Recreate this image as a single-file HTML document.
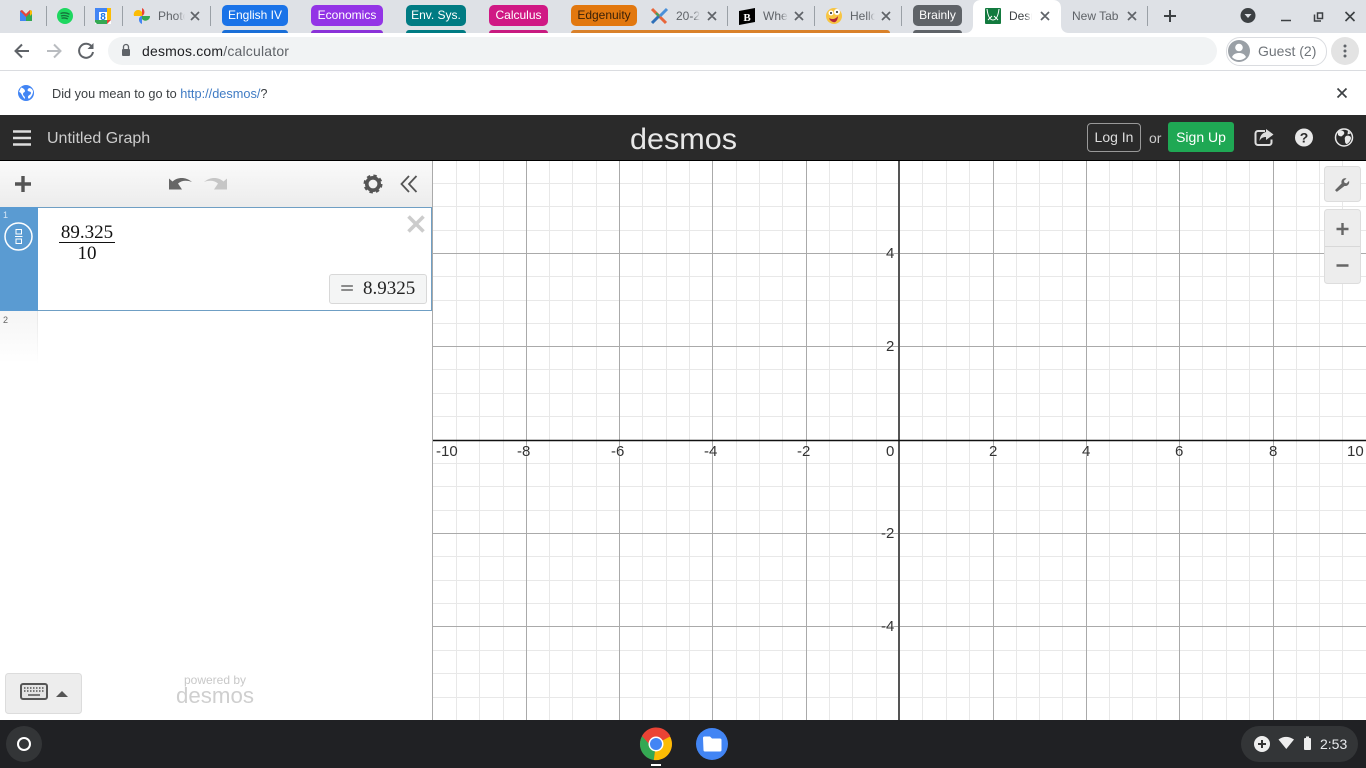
<!DOCTYPE html>
<html><head><meta charset="utf-8"><title>Desmos</title>
<style>
html,body{margin:0;padding:0;width:1366px;height:768px;overflow:hidden;background:#fff;font-family:"Liberation Sans",sans-serif}
.a{position:absolute;white-space:nowrap}
.chip{position:absolute;top:5px;height:21px;line-height:21px;border-radius:5px;color:#fff;font-size:12px;text-align:center}
.ul{position:absolute;top:30px;height:3px;border-radius:4px 4px 0 0}
.tt{position:absolute;top:9px;font-size:12px;line-height:14px;color:#5f6368;overflow:hidden;white-space:nowrap;-webkit-mask-image:linear-gradient(90deg,#000 70%,transparent);mask-image:linear-gradient(90deg,#000 70%,transparent)}
.sep{position:absolute;top:6px;width:1px;height:20px;background:#9aa0a6}
.lb{position:absolute;font-size:15px;line-height:16px;color:#333;text-shadow:0 0 2px #fff;white-space:nowrap}
svg{position:absolute;overflow:visible}
</style></head><body>
<div class="a" style="left:0;top:0;width:1366px;height:33px;background:#dee1e6"></div>
<div class="a" style="left:0;top:33px;width:1366px;height:37px;background:#fff"></div>
<div class="a" style="left:0;top:70px;width:1366px;height:1px;background:#dadce0"></div>

<!-- active tab -->
<svg style="left:0;top:0" width="1366" height="33"><path d="M965 33c5 0 8-3 8-8V8c0-5 3-8 8-8h72c5 0 8 3 8 8v17c0 5 3 8 8 8z" fill="#fff"/>
<g stroke="#5f6368" stroke-width="1.7" fill="none">
<path d="M191 12l8 8M199 12l-8 8M708 12l8 8M716 12l-8 8M795 12l8 8M803 12l-8 8M882 12l8 8M890 12l-8 8M1041 12l8 8M1049 12l-8 8M1128 12l8 8M1136 12l-8 8"/></g>
<path d="M1164 16h12M1170 10v12" stroke="#3c4043" stroke-width="2" fill="none"/>
<!-- gmail -->
<path d="M20 21V11l2-1 4 4v7z" fill="#4285f4"/><path d="M32 21V11l-2-1-4 4v7z" fill="#34a853"/><path d="M20 11l2-1 4 4 4-4 2 1-6 6z" fill="#ea4335"/><path d="M30 10l2 1v3l-2 2z" fill="#fbbc04"/>
<!-- spotify -->
<circle cx="65" cy="16" r="8" fill="#1ed760"/><path d="M60.500 13.500c3-1 6.500-.7 9 .8M61 16c2.600-.8 5.400-.5 7.700.7M61.500 18.300c2.200-.6 4.400-.4 6.300.6" stroke="#14713a" stroke-width="1.300" fill="none"/>
<!-- calendar -->
<rect x="95" y="8" width="16" height="16" fill="#fff"/><path d="M95 8h12v4H99v8h-4z" fill="#4285f4"/><path d="M95 20h12v4H97l-2-2z" fill="#34a853"/><path d="M107 8h4v12h-4z" fill="#fbbc04"/><path d="M107 20h4l-4 4z" fill="#ea4335"/>
<text x="103" y="20" font-size="10" font-weight="bold" text-anchor="middle" fill="#1a73e8" font-family="Liberation Sans">8</text>
<!-- photos -->
<path d="M142 16v-8a4.500 4.500 0 0 1 0 8z" fill="#ea4335"/><path d="M142 16h-8a4.500 4.500 0 0 1 8-4z" fill="#fbbc04"/><path d="M142 16v8a4.500 4.500 0 0 1-1-8z" fill="#4285f4"/><path d="M142 16h8a4.500 4.500 0 0 1-8 3z" fill="#34a853"/>
<!-- X favicon -->
<path d="M652 9l14 14" stroke="#e8663a" stroke-width="3"/><path d="M667 9l-7 7" stroke="#4a90d9" stroke-width="3"/><path d="M652 23l7-7" stroke="#2d6fb8" stroke-width="3"/><path d="M659 16l-3-3" stroke="#3fa35b" stroke-width="2"/>
<!-- B -->
<path d="M739 11l16-3v14l-16 3z" fill="#000"/><text x="747" y="21" font-size="11" font-weight="bold" text-anchor="middle" fill="#fff" font-family="Liberation Serif">B</text>
<!-- emoji -->
<circle cx="834" cy="16" r="8" fill="#f7c543"/><circle cx="831" cy="13" r="2.500" fill="#fff"/><circle cx="837" cy="12" r="3" fill="#fff"/><circle cx="831" cy="13" r="1" fill="#222"/><circle cx="837" cy="12" r="1" fill="#222"/><path d="M829 18c3 2 7 1 9-2-.3 4-2 7-5 6-2-.6-3.500-2-4-4z" fill="#b3263a"/>
<!-- desmos favicon -->
<rect x="985" y="8" width="16" height="16" rx="1" fill="#127a3e"/><path d="M987 9c1 8 3 11 6 11s5-3 6-11M988 20l4-4M998 20l-4-4" stroke="#fff" stroke-width="1" fill="none"/>
<!-- window controls -->
<circle cx="1248" cy="15.500" r="7.500" fill="#3c4043"/><path d="M1244.500 14h7l-3.500 4z" fill="#dee1e6"/>
<path d="M1281 20.500h10" stroke="#3c4043" stroke-width="1.500"/>
<path d="M1314.500 14.500v6.500h6.500M1317.500 13h5v5.500h-5z" stroke="#3c4043" stroke-width="1.500" fill="none"/>
<path d="M1345.500 12l9 9M1354.500 12l-9 9" stroke="#3c4043" stroke-width="1.600"/>
</svg>

<div class="sep" style="left:46px"></div><div class="sep" style="left:84px"></div><div class="sep" style="left:122px"></div><div class="sep" style="left:210px"></div>
<div class="sep" style="left:727px"></div><div class="sep" style="left:814px"></div><div class="sep" style="left:901px"></div><div class="sep" style="left:1147px"></div>

<div class="tt" style="left:158px;width:27px">Photos</div>
<div class="chip" style="left:222px;width:66px;background:#1a73e8">English IV</div><div class="ul" style="left:222px;width:66px;background:#1a6fd8"></div>
<div class="chip" style="left:311px;width:72px;background:#9334e6">Economics</div><div class="ul" style="left:311px;width:72px;background:#8a32d8"></div>
<div class="chip" style="left:406px;width:60px;background:#007b83">Env. Sys.</div><div class="ul" style="left:406px;width:60px;background:#007b83"></div>
<div class="chip" style="left:489px;width:59px;background:#d01884">Calculus</div><div class="ul" style="left:489px;width:59px;background:#c81a80"></div>
<div class="chip" style="left:571px;width:66px;background:#e2780f;color:#3b2108">Edgenuity</div><div class="ul" style="left:571px;width:319px;background:#d9812a"></div>
<div class="chip" style="left:913px;width:49px;background:#5f6368">Brainly</div><div class="ul" style="left:913px;width:49px;background:#5f6368"></div>
<div class="tt" style="left:676px;width:24px">20-21</div>
<div class="tt" style="left:763px;width:25px">Where</div>
<div class="tt" style="left:850px;width:25px">Hello</div>
<div class="tt" style="left:1009px;width:23px;color:#3c4043">Desmos</div>
<div class="a" style="left:1072px;top:9px;font-size:12px;line-height:14px;color:#5f6368">New Tab</div>

<!-- toolbar -->
<div class="a" style="left:108px;top:37px;width:1109px;height:28px;border-radius:14px;background:#f1f3f4"></div>
<div class="a" style="left:142px;top:43px;font-size:14px;letter-spacing:.19px;line-height:16px;color:#202124">desmos.com<span style="color:#5f6368">/calculator</span></div>
<div class="a" style="left:1226px;top:37px;width:99px;height:27px;border:1px solid #dadce0;border-radius:14px"></div>
<div class="a" style="left:1258px;top:43px;font-size:14px;line-height:16px;color:#70757a">Guest (2)</div>
<div class="a" style="left:1331px;top:37px;width:28px;height:28px;border-radius:14px;background:#e3e3e3"></div>
<svg style="left:0;top:0" width="1366" height="115">
<path d="M29 51H16M22 44.500L15.500 51l6.500 6.500" stroke="#5f6368" stroke-width="2" fill="none"/>
<path d="M47 51h13M54 44.500l6.500 6.500-6.500 6.500" stroke="#b9bcc0" stroke-width="2" fill="none"/>
<path d="M92 47a7 7 0 1 0 1 5" stroke="#5f6368" stroke-width="2" fill="none"/><path d="M93.500 43v6h-6z" fill="#5f6368"/>
<rect x="122" y="49" width="8" height="7" rx="1" fill="#5f6368"/><path d="M123.500 49v-2a2.500 2.500 0 0 1 5 0v2" stroke="#5f6368" stroke-width="1.300" fill="none"/>
<circle cx="1239" cy="51" r="11" fill="#9aa0a6"/><circle cx="1239" cy="47.500" r="3.800" fill="#fff"/><path d="M1232 57c1.500-3 4-4 7-4s5.500 1 7 4c-2 2-4 3-7 3s-5-1-7-3z" fill="#fff"/>
<g fill="#5f6368"><circle cx="1345" cy="46" r="1.500"/><circle cx="1345" cy="51" r="1.500"/><circle cx="1345" cy="56" r="1.500"/></g>
<circle cx="26" cy="93" r="8" fill="#4285f4"/><path d="M21 87.500c2 .5 4 2 4 3.500s-2 1-2 3 2 2 2 4-2-1-3-3-2-3-3-3zM30 88c-2 0-3 2-2 3s3 0 3 2-3 2-3 4 1 2 2 1 3-4 3-6-1-3-3-4z" fill="#fff"/>
<path d="M1337.500 88.500l9 9M1346.500 88.500l-9 9" stroke="#3c4043" stroke-width="1.700"/>
</svg>
<div class="a" style="left:52px;top:86px;font-size:12.750px;line-height:16px;color:#3c4043">Did you mean to go to <span style="color:#3f7bc4">http://desmos/</span>?</div>

<!-- desmos header -->
<div class="a" style="left:0;top:115px;width:1366px;height:45px;background:#2a2a2a"></div>
<div class="a" style="left:0;top:160px;width:1366px;height:1px;background:#000"></div>
<div class="a" style="left:47px;top:130px;font-size:16px;line-height:18px;color:#ccc">Untitled Graph</div>
<div class="a" style="left:1087px;top:123px;width:52px;height:27px;border:1px solid #999;border-radius:4px;color:#ddd;font-size:14px;line-height:27px;text-align:center">Log In</div>
<div class="a" style="left:1149px;top:130px;font-size:14px;line-height:16px;color:#ccc">or</div>
<div class="a" style="left:1168px;top:122px;width:66px;height:30px;background:#1fa854;border-radius:3px;color:#fff;font-size:14px;line-height:30px;text-align:center">Sign Up</div>

<!-- graph -->
<svg style="left:433px;top:161px" width="933" height="559" viewBox="433 161 933 559">
<path stroke="#e8e8e8" fill="none" d="M456.500 161v559M479.500 161v559M503.500 161v559M549.500 161v559M572.500 161v559M596.500 161v559M642.500 161v559M666.500 161v559M689.500 161v559M736.500 161v559M759.500 161v559M782.500 161v559M829.500 161v559M852.500 161v559M876.500 161v559M922.500 161v559M946.500 161v559M969.500 161v559M1016.500 161v559M1039.500 161v559M1062.500 161v559M1109.500 161v559M1132.500 161v559M1156.500 161v559M1202.500 161v559M1226.500 161v559M1249.500 161v559M1296.500 161v559M1319.500 161v559M1342.500 161v559
M433 183.500h933M433 206.500h933M433 230.500h933M433 276.500h933M433 300.500h933M433 323.500h933M433 369.500h933M433 393.500h933M433 416.500h933M433 463.500h933M433 486.500h933M433 510.500h933M433 556.500h933M433 580.500h933M433 603.500h933M433 650.500h933M433 673.500h933M433 697.500h933"/>
<path stroke="#aaa" fill="none" d="M526.500 161v559M619.500 161v559M712.500 161v559M806.500 161v559M993.500 161v559M1086.500 161v559M1179.500 161v559M1273.500 161v559M433 253.500h933M433 346.500h933M433 533.500h933M433 626.500h933"/>
<path d="M899 161v559" stroke="#555" stroke-width="2"/>
<path d="M433 440.500h933" stroke="#111" stroke-width="1.600"/>
</svg>
<div class="lb" style="left:436px;top:444px">-10</div><div class="lb" style="left:517px;top:444px">-8</div><div class="lb" style="left:611px;top:444px">-6</div><div class="lb" style="left:704px;top:444px">-4</div><div class="lb" style="left:797px;top:444px">-2</div><div class="lb" style="left:886px;top:444px">0</div><div class="lb" style="left:989px;top:444px">2</div><div class="lb" style="left:1082px;top:444px">4</div><div class="lb" style="left:1175px;top:444px">6</div><div class="lb" style="left:1269px;top:444px">8</div><div class="lb" style="left:1347px;top:444px">10</div>
<div class="lb" style="left:886px;top:246px">4</div><div class="lb" style="left:886px;top:339px">2</div><div class="lb" style="left:881px;top:526px">-2</div><div class="lb" style="left:881px;top:619px">-4</div>

<!-- left panel -->
<div class="a" style="left:0;top:161px;width:432px;height:559px;background:#fff;border-right:1px solid #aaa"></div>
<div class="a" style="left:0;top:161px;width:432px;height:46px;background:linear-gradient(#fafafa,#ececec)"></div>
<div class="a" style="left:0;top:207px;width:430px;height:102px;border:1px solid #6f9fc4;background:#fff"></div>
<div class="a" style="left:0;top:207px;width:38px;height:104px;background:#5a9bd2"></div>
<div class="a" style="left:0;top:311px;width:37px;height:52px;background:linear-gradient(#f5f5f5,#fff);border-right:1px solid #f0f0f0;border-image:linear-gradient(#e6e6e6,#fff) 1"></div>
<div class="a" style="left:3px;top:210px;font-size:9px;line-height:11px;color:#d5e6f5">1</div>
<div class="a" style="left:3px;top:315px;font-size:9px;line-height:11px;color:#666">2</div>
<div class="a" style="left:59px;top:222px;width:56px;height:20px;border-bottom:1px solid #111"></div>
<div class="a" style="left:59px;top:223px;width:56px;text-align:center;font-family:'Liberation Serif',serif;font-size:19px;line-height:20px;color:#111">89.325</div>
<div class="a" style="left:59px;top:244px;width:56px;text-align:center;font-family:'Liberation Serif',serif;font-size:19px;line-height:20px;color:#111">10</div>
<div class="a" style="left:329px;top:274px;width:96px;height:28px;background:#f4f5f5;border:1px solid #d8d8d8;border-radius:3px"></div>
<div class="a" style="left:340px;top:279px;font-family:'Liberation Serif',serif;font-size:20px;line-height:20px;color:#222;transform:scaleX(1.25);transform-origin:0 50%">=</div>
<div class="a" style="left:363px;top:279px;font-family:'Liberation Serif',serif;font-size:19px;line-height:20px;color:#222">8.9325</div>

<svg style="left:0;top:0" width="1366" height="768">
<!-- hamburger -->
<path d="M13 131.500h18M13 138h18M13 144.500h18" stroke="#ddd" stroke-width="2.600"/>
<!-- header icons -->
<path d="M1265 131h-7a2.500 2.500 0 0 0-2.500 2.500v9a2.500 2.500 0 0 0 2.500 2.500h11a2.500 2.500 0 0 0 2.500-2.500v-3" stroke="#ddd" stroke-width="2" fill="none"/><path d="M1266 129l7.500 5.500-7.500 5.500v-3c-3 0-5 1-6.500 4 .3-5 2.500-8 6.500-9z" fill="#ddd"/>
<circle cx="1304" cy="137.500" r="9" fill="#e8e8e8"/><text x="1304" y="142.500" font-size="14" font-weight="bold" text-anchor="middle" fill="#2a2a2a" font-family="Liberation Sans">?</text>
<circle cx="1344" cy="137.500" r="8.500" fill="#2a2a2a" stroke="#e8e8e8" stroke-width="1.500"/><path d="M1338 132c2-2 5-2 6 0s-1 3-2 4-3 0-4-1zM1346 136c2-1 5 0 5 2s-2 5-4 6c-1 0-2-1-2-3s-1-3 1-5zM1348 130.500l2.500 3-3 1z" fill="#e8e8e8"/>
<!-- expression toolbar -->
<path d="M15 184h16M23 176v16" stroke="#555" stroke-width="3.400"/>
<path d="M169 189.500V178.500l3.500 3c5-4.500 13-5 19.500.5c-6-2-10-1.500-14 1.500l4 6z" fill="#666"/>
<path d="M169 189.500V178.500l3.500 3c5-4.500 13-5 19.500.5c-6-2-10-1.500-14 1.500l4 6z" fill="#c6c6c6" transform="translate(396 0) scale(-1 1)"/>
<circle cx="373" cy="184" r="6.200" fill="none" stroke="#555" stroke-width="3.600"/>
<circle cx="373" cy="184" r="8" fill="none" stroke="#555" stroke-width="3" stroke-dasharray="3.300 3"/>
<path d="M409 176l-7.500 8 7.500 8M416.500 176l-7.500 8 7.500 8" stroke="#555" stroke-width="1.800" fill="none"/>
<!-- expression icon -->
<circle cx="18.500" cy="236.500" r="13.500" fill="none" stroke="#fff" stroke-width="1.500"/>
<rect x="16" y="229.500" width="5.500" height="4.500" fill="none" stroke="#fff"/><path d="M15 236.500h7.500" stroke="#fff"/><rect x="16" y="239" width="5.500" height="4.500" fill="none" stroke="#fff"/>
<path d="M408.500 216.500l15 15M423.500 216.500l-15 15" stroke="#ccc" stroke-width="3.600"/>
<!-- right controls -->
<rect x="1324.500" y="166.500" width="36" height="35" rx="3" fill="#ededed" stroke="#ddd"/>
<path transform="translate(1335 177.500) scale(.74) translate(-1334.500 -177.500)" d="M1337 197l-2.500-2.500 9-9c-1-3 .5-6.500 4-7 1 0 2 0 2.500.3l-3.500 3.300 1 2.600 2.600.8 3.400-3.500c1 3.500-1.500 7.500-6.200 7z" fill="#666"/>
<rect x="1324.500" y="209.500" width="36" height="74" rx="3" fill="#ededed" stroke="#ddd"/>
<path d="M1325 246.500h35" stroke="#d8d8d8"/>
<path d="M1336.500 229h12M1342.500 223v12M1336.500 265.500h12" stroke="#666" stroke-width="2.400"/>
<!-- keyboard button -->
<rect x="5.500" y="673.500" width="76" height="40" rx="3" fill="#ededed" stroke="#dcdcdc"/>
<rect x="21" y="684" width="26" height="15" rx="2" fill="#e4e4e4" stroke="#555" stroke-width="2"/>
<path d="M24 688h20M24 691h20" stroke="#555" stroke-width="1.500" stroke-dasharray="1.500 1.500"/><path d="M28 695h12" stroke="#555" stroke-width="1.500"/>
<path d="M56 697l6-6 6 6z" fill="#555"/>
<text x="215" y="684" font-size="12" text-anchor="middle" fill="#c8c8c8" font-family="Liberation Sans">powered by</text>
<text x="176" y="703" font-size="22" textLength="78" lengthAdjust="spacingAndGlyphs" fill="#cfcfcf" font-family="Liberation Sans">desmos</text>
<text x="630" y="149" font-size="30" textLength="107" lengthAdjust="spacingAndGlyphs" fill="#e8e8e8" font-family="Liberation Sans">desmos</text>
<!-- shelf -->
<rect x="0" y="720" width="1366" height="48" fill="#202124"/>
<circle cx="24" cy="744" r="18" fill="#333537"/><circle cx="24" cy="744" r="6" fill="none" stroke="#fff" stroke-width="2"/>
<circle cx="656" cy="744" r="16" fill="#ea4335"/>
<path d="M656 744L642.200 736a16 16 0 0 0 11.600 24l2.200-16z" fill="#34a853"/>
<path d="M656 744l-2.200 16A16 16 0 0 0 670 736.500z" fill="#fbbc04"/>
<path d="M656 736h14.200a16 16 0 0 0-1-1.800A16 16 0 0 0 642 736l7 8z" fill="#ea4335"/>
<circle cx="656" cy="744" r="7.500" fill="#fff"/><circle cx="656" cy="744" r="6" fill="#4285f4"/>
<rect x="651" y="764" width="10" height="2" fill="#fff"/>
<circle cx="712" cy="744" r="16" fill="#4285f4"/><path d="M703 738a1.500 1.500 0 0 1 1.500-1.500h5.500l2 2h8a1.500 1.500 0 0 1 1.500 1.500v10a1.500 1.500 0 0 1-1.500 1.500h-15a1.500 1.500 0 0 1-1.500-1.500z" fill="#fff"/>
<rect x="1241" y="726" width="117" height="36" rx="18" fill="#333537"/>
<circle cx="1262" cy="744" r="8" fill="#eee"/><path d="M1258 744h8M1262 740v8" stroke="#333" stroke-width="2"/>
<path d="M1278.500 739.500c5-3.500 10-3.500 15.500 0l-7.700 9.500z" fill="#eee"/>
<rect x="1304" y="738" width="7" height="12" rx="1" fill="#eee"/><rect x="1306" y="736.500" width="3" height="2" fill="#eee"/>
</svg>
<div class="a" style="left:1320px;top:737px;font-size:14px;line-height:15px;color:#e8eaed">2:53</div>
</body></html>
